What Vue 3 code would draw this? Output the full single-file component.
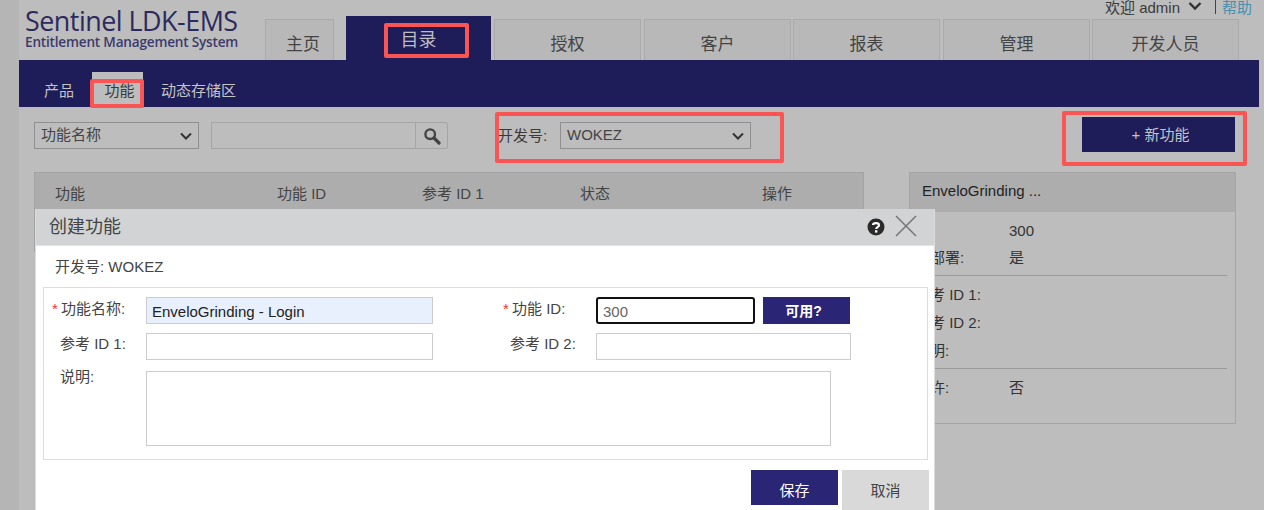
<template>
  <div class="page">
    <div class="shell">
      <header class="top">
        <div class="logo">
          <div class="logo-main">Sentinel LDK-EMS</div>
          <div class="logo-sub">Entitlement Management System</div>
        </div>
        <nav class="tabs">
          <div v-for="t in tabs" :key="t.name" class="tab" :class="{ active: t.active, home: t.home }" :style="{ width: t.w + 'px', marginRight: t.m + 'px' }">{{ t.name }}</div>
        </nav>
        <div class="user">
          <span>欢迎 admin</span>
          <svg class="chev" width="14" height="10" viewBox="0 0 14 10"><path d="M1.5 2 L7 7.5 L12.5 2" fill="none" stroke="#333" stroke-width="2.4"/></svg>
          <span class="sep"></span>
          <span class="help">帮助</span>
        </div>
      </header>

      <div class="subnav">
        <span class="sub">产品</span>
        <span class="sub on">功能</span>
        <span class="sub">动态存储区</span>
      </div>

      <div class="toolbar">
        <div class="sel first">功能名称
          <svg class="caret" width="12" height="8" viewBox="0 0 12 8"><path d="M1 1.5 L6 6.5 L11 1.5" fill="none" stroke="#333" stroke-width="2"/></svg>
        </div>
        <div class="search">
          <div class="search-input"></div>
          <div class="search-btn">
            <svg width="18" height="18" viewBox="0 0 18 18"><circle cx="7.2" cy="7.2" r="4.8" fill="none" stroke="#444" stroke-width="2.4"/><path d="M11 11 L16 16" stroke="#444" stroke-width="3.2" stroke-linecap="round"/></svg>
          </div>
        </div>
        <span class="dev-label">开发号:</span>
        <div class="sel dev">WOKEZ
          <svg class="caret" width="12" height="8" viewBox="0 0 12 8"><path d="M1 1.5 L6 6.5 L11 1.5" fill="none" stroke="#333" stroke-width="2"/></svg>
        </div>
        <div class="new">+ 新功能</div>
      </div>

      <div class="content">
        <div class="table">
          <div class="thead">
            <span class="c1">功能</span>
            <span class="c2">功能 ID</span>
            <span class="c3">参考 ID 1</span>
            <span class="c4">状态</span>
            <span class="c5">操作</span>
          </div>
        </div>
        <aside class="panel">
          <div class="panel-head">EnveloGrinding ...</div>
          <div class="panel-body">
            <div class="kv"><span class="k">ID:</span><span>300</span></div>
            <div class="kv"><span class="k">可部署:</span><span>是</span></div>
            <div class="rule"></div>
            <div class="kv tall"><span class="k">参考 ID 1:</span></div>
            <div class="kv tall"><span class="k">参考 ID 2:</span></div>
            <div class="kv tall"><span class="k">说明:</span></div>
            <div class="rule r2"></div>
            <div class="kv"><span class="k">允许:</span><span>否</span></div>
          </div>
        </aside>
      </div>
    </div>

    <section class="modal">
      <div class="modal-head">
        <span class="modal-title">创建功能</span>
        <svg class="q" width="18" height="18" viewBox="0 0 18 18"><circle cx="9" cy="9" r="8.5" fill="#2b2b2b"/><path d="M6 7 C6 4.6 12 4.4 12 7.2 C12 9.2 9.2 9 9.2 11" fill="none" stroke="#fff" stroke-width="2.2"/><rect x="8" y="12.2" width="2.4" height="2.4" fill="#fff"/></svg>
        <svg class="x" width="22" height="22" viewBox="0 0 22 22"><path d="M1 1 L21 21 M21 1 L1 21" stroke="#777" stroke-width="1.6"/></svg>
      </div>
      <div class="dev-row">开发号: WOKEZ</div>
      <div class="form">
        <label class="lab first-row"><i>*</i>功能名称:</label>
        <div class="inp filled">EnveloGrinding - Login</div>
        <label class="lab lab2 first-row"><i>*</i>功能 ID:</label>
        <div class="idwrap">
          <div class="inp focus">300</div>
          <div class="avail">可用?</div>
        </div>
        <label class="lab pad">参考 ID 1:</label>
        <div class="inp"></div>
        <label class="lab lab2 pad">参考 ID 2:</label>
        <div class="inp ref2"></div>
        <label class="lab pad desc">说明:</label>
        <div class="area"></div>
      </div>
      <div class="actions">
        <div class="save">保存</div>
        <div class="cancel">取消</div>
      </div>
    </section>

    <div class="mark m1"></div>
    <div class="mark m2"></div>
    <div class="mark m3"></div>
    <div class="mark m4"></div>
  </div>
</template>

<script setup>
const tabs = [
  { name: '主页', w: 69, m: 12, home: true },
  { name: '目录', w: 145, m: 3, active: true },
  { name: '授权', w: 147, m: 3 },
  { name: '客户', w: 147, m: 2 },
  { name: '报表', w: 147, m: 3 },
  { name: '管理', w: 147, m: 2 },
  { name: '开发人员', w: 147, m: 0 }
]
</script>

<style>
html, body { margin: 0; padding: 0; overflow: hidden; }
</style>

<style scoped>
.page {
  position: relative;
  width: 1264px;
  height: 510px;
  overflow: hidden;
  background: #bdbdbd;
  font-family: "Liberation Sans", "Noto Sans CJK SC", sans-serif;
  font-size: 15px;
  color: #3a3a3a;
  box-sizing: border-box;
  padding-left: 19px;
}
.page::before {
  content: "";
  position: absolute;
  left: 0; top: 0; bottom: 0;
  width: 19px;
  background: #b5b5b5;
}
.shell { width: 1240px; }
.top { position: relative; height: 60px; display: flex; align-items: flex-end; }
.logo { position: absolute; left: 6px; top: 7px; color: #2c2a5e; font-family: "Open Sans", sans-serif; }
.logo-main { font-size: 26.9px; line-height: 28px; letter-spacing: -0.5px; white-space: nowrap; }
.logo-sub { font-size: 13.6px; line-height: 14px; font-weight: 600; letter-spacing: -0.2px; white-space: nowrap; color: #3c3a6c; }
.tabs { display: flex; align-items: flex-end; margin-left: 246px; height: 44px; }
.tab {
  height: 41px;
  box-sizing: border-box;
  border: 1px solid #aaa;
  border-bottom: 0;
  background: #b8b8b8;
  text-align: center;
  font-size: 17px;
  line-height: 49px;
  color: #444;
}
.tab.home { padding-left: 7px; }
.tab.active { height: 44px; background: #1f1c5a; border-color: #1f1c5a; color: #bdbdbd; font-size: 18px; line-height: 47px; }
.user { position: absolute; left: 1086px; top: -4px; display: flex; align-items: center; white-space: nowrap; height: 20px; font-size: 15px; }
.chev { margin-left: 8px; }
.sep { width: 1px; height: 15px; background: #444; margin: 0 6px 0 13px; }
.help { color: #4a90ad; font-size: 15px; }
.subnav { height: 47px; background: #1f1c5a; display: flex; align-items: flex-end; padding-left: 25px; box-sizing: border-box; }
.sub { color: #c4c4c4; height: 35px; line-height: 38px; width: 30px; white-space: nowrap; }
.sub.on { width: 51px; box-sizing: border-box; padding-left: 4px; background: #bdbdbd; color: #3a3a3a; text-align: center; margin: 0 18px; }
.toolbar { height: 65px; display: flex; align-items: flex-start; position: relative; padding-left: 15px; }
.sel { position: relative; box-sizing: border-box; height: 27px; border: 1px solid #8f8f8f; line-height: 24px; padding-left: 6px; color: #444; margin-top: 15px; }
.first { width: 165px; }
.dev { width: 191px; }
.caret { position: absolute; right: 6px; top: 9px; }
.search { display: flex; margin: 15px 50px 0 12px; height: 27px; }
.search-input { width: 205px; box-sizing: border-box; border: 1px solid #a5a5a5; }
.search-btn { width: 32px; box-sizing: border-box; border: 1px solid #a5a5a5; border-left: 0; border-radius: 0 3px 3px 0; display: flex; align-items: center; justify-content: center; }
.dev-label { margin: 17px 13px 0 0; width: 49px; white-space: nowrap; }
.new { margin: 10px 0 0 331px; width: 153px; height: 35px; box-sizing: border-box; padding-left: 4px; background: #1f1c5a; color: #c4c4c4; text-align: center; line-height: 35px; }
.content { display: flex; align-items: flex-start; padding-left: 15px; }
.table { width: 830px; margin-right: 45px; }
.thead { position: relative; height: 80px; box-sizing: border-box; background: #adadad; border: 1px solid #a3a3a3; }
.thead span { position: absolute; top: 9px; color: #444; white-space: nowrap; }
.c1 { left: 20px; } .c2 { left: 242px; } .c3 { left: 387px; } .c4 { left: 545px; } .c5 { left: 727px; }
.panel { width: 327px; height: 252px; box-sizing: border-box; border: 1px solid #a5a5a5; }
.panel-head { height: 39px; background: #adadad; line-height: 36px; padding-left: 12px; color: #222; }
.panel-body { padding: 8px 8px 0 5px; }
.kv { display: flex; height: 27px; line-height: 22px; color: #333; }
.kv.tall { height: 28px; }
.k { width: 94px; flex: none; white-space: nowrap; }
.rule { height: 1px; background: #9a9a9a; margin: 1px 0 8px 0; }
.rule.r2 { margin-top: 0; }
.modal {
  position: absolute;
  left: 35px;
  top: 209px;
  width: 900px;
  height: 320px;
  box-sizing: border-box;
  background: #fff;
  border: 1px solid #dcdcdc;
  border-top: 0;
}
.modal-head { height: 37px; background: #d1d3d4; display: flex; align-items: center; padding-left: 13px; border-bottom: 1px solid #e4e4e4; box-sizing: border-box; }
.modal-title { font-size: 18px; line-height: 34px; height: 34px; color: #444; flex: 1; }
.q { margin-right: 10px; }
.x { margin-right: 17px; margin-top: -2px; }
.dev-row { height: 41px; line-height: 42px; padding-left: 19px; color: #444; }
.form {
  margin-left: 7px;
  width: 885px;
  box-sizing: border-box;
  border: 1px solid #ddd;
  padding: 9px 0 15px;
  display: grid;
  grid-template-columns: 102px 287px 163px 1fr;
  grid-template-rows: 27px 27px 75px;
  row-gap: 9px;
}
.lab { padding-left: 8px; line-height: 22px; color: #444; white-space: nowrap; }
.lab i { color: #e33; font-style: normal; display: inline-block; width: 9px; }
.first-row { line-height: 24px; }
.lab2.first-row { padding-left: 70px; }
.pad { padding-left: 16px; }
.desc { line-height: 16px; }
.lab2 { padding-left: 69px; }
.lab2.pad { padding-left: 77px; }
.inp { box-sizing: border-box; border: 1px solid #ccc; height: 27px; line-height: 27px; padding-left: 5px; color: #222; background: #fff; }
.filled { background: #e8f0fe; }
.idwrap { display: flex; gap: 8px; }
.focus { width: 159px; border: 2px solid #111; border-radius: 3px; line-height: 25px; color: #666; }
.avail { width: 87px; height: 27px; background: #2b2575; color: #fff; font-weight: 700; font-size: 14px; line-height: 28px; padding-right: 6px; box-sizing: border-box; text-align: center; }
.ref2 { width: 255px; }
.area { grid-column: 2 / 5; width: 685px; height: 75px; box-sizing: border-box; border: 1px solid #ccc; margin-top: 2px; }
.actions { display: flex; gap: 4px; margin: 10px 0 0 715px; }
.save, .cancel { width: 87px; text-align: center; line-height: 42px; }
.save { height: 35px; background: #2b2575; color: #fff; }
.cancel { height: 40px; background: #d9d9d9; color: #444; }
.mark { position: absolute; box-sizing: border-box; border: 4px solid #fb5454; border-radius: 2px; }
.m1 { left: 384px; top: 23px; width: 85px; height: 35px; }
.m2 { left: 90px; top: 79px; width: 54px; height: 29px; }
.m3 { left: 495px; top: 112px; width: 289px; height: 51px; }
.m4 { left: 1062px; top: 111px; width: 185px; height: 55px; }
</style>
